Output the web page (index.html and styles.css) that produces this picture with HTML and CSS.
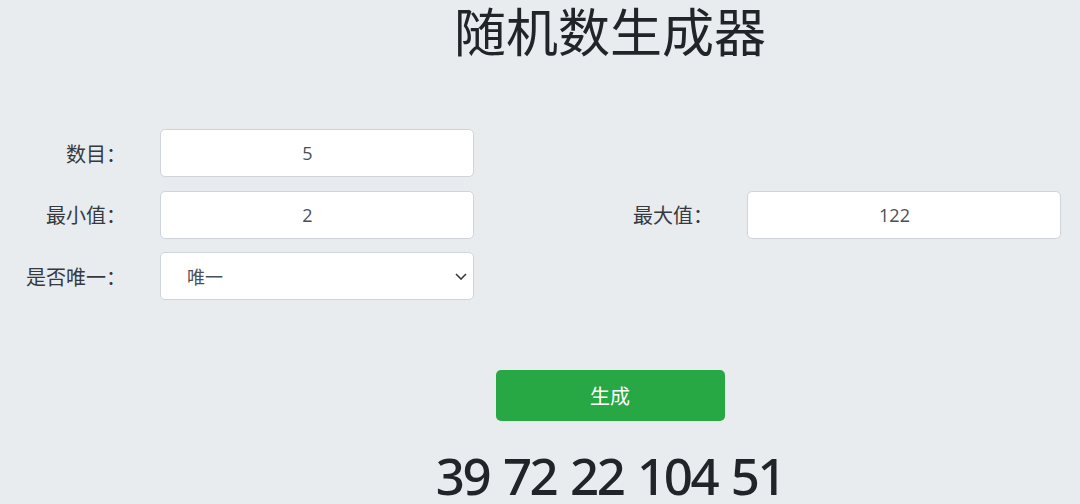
FILE: index.html
```html
<!DOCTYPE html>
<html lang="zh-CN">
<head>
    <meta charset="utf-8">
    <title>随机数生成器</title>
    <link rel="stylesheet" href="styles.css">
</head>
<body>
    <div class="page">
        <div class="center">
            <h1 class="title">随机数生成器</h1>
        </div>
        <form class="form">
            <div class="field">
                <label for="count">数目：</label>
                <input type="number" id="count" class="input" value="5">
            </div>
            <div class="field"></div>
            <div class="field">
                <label for="min">最小值：</label>
                <input type="number" id="min" class="input" value="2">
            </div>
            <div class="field">
                <label for="max">最大值：</label>
                <input type="number" id="max" class="input" value="122">
            </div>
            <div class="field">
                <label for="unique">是否唯一：</label>
                <div class="select-wrap">
                    <select id="unique" class="input select">
                        <option>唯一</option>
                        <option>不唯一</option>
                    </select>
                    <svg class="chevron" width="12" height="7" viewBox="0 0 12 7">
                        <path d="M1 1l5 5 5-5" fill="none" stroke="#343a40" stroke-width="1.6"/>
                    </svg>
                </div>
            </div>
        </form>
        <div class="center">
            <button type="button" class="generate-button">生成</button>
            <div class="result">39 72 22 104 51</div>
        </div>
    </div>
</body>
</html>
```

FILE: styles.css
```css
body {
    margin: 0;
    background-color: #e9ecef;
    font-family: "Noto Sans CJK SC", "Noto Sans", sans-serif;
    color: #212529;
    overflow: hidden;
}
.page {
    width: 1080px;
}
/* the original layout is centred a bit right of the window middle */
.center {
    padding-left: 140px;
    text-align: center;
}
.title {
    margin: 0;
    font-size: 52px;
    font-weight: 400;
    line-height: 60px;
}
.form {
    margin-top: 69px;
    display: grid;
    grid-template-columns: 587px 493px;
    row-gap: 13.5px;
}
.field {
    display: flex;
    align-items: center;
    height: 48px;
}
.field label {
    width: 160px;
    box-sizing: border-box;
    padding-right: 34px;
    text-align: right;
    font-size: 20px;
    color: #343a40;
}
.input {
    width: 314px;
    height: 48px;
    box-sizing: border-box;
    border: 1px solid #ced4da;
    border-radius: 5px;
    background-color: #fff;
    font-family: "Open Sans", "Noto Sans CJK SC", sans-serif;
    font-size: 18px;
    color: #495057;
    text-align: center;
    padding: 0 14px 0 10px;
    outline: none;
}
.select-wrap {
    position: relative;
}
.select {
    appearance: none;
    text-align: left;
    padding-left: 26px;
    font-family: "Noto Sans CJK SC", sans-serif;
}
.chevron {
    position: absolute;
    right: 7px;
    top: 21px;
    pointer-events: none;
}
.generate-button {
    display: block;
    margin: 70px auto 0;
    width: 229px;
    height: 51px;
    border: none;
    border-radius: 5px;
    background-color: #28a745;
    color: #fff;
    font-family: "Noto Sans CJK SC", sans-serif;
    font-size: 20px;
    cursor: pointer;
}
.result {
    margin-top: 24px;
    font-family: "Noto Sans", sans-serif;
    font-size: 51px;
    font-weight: 500;
    letter-spacing: -2.5px;
    word-spacing: 3px;
    line-height: 60px;
}
```
